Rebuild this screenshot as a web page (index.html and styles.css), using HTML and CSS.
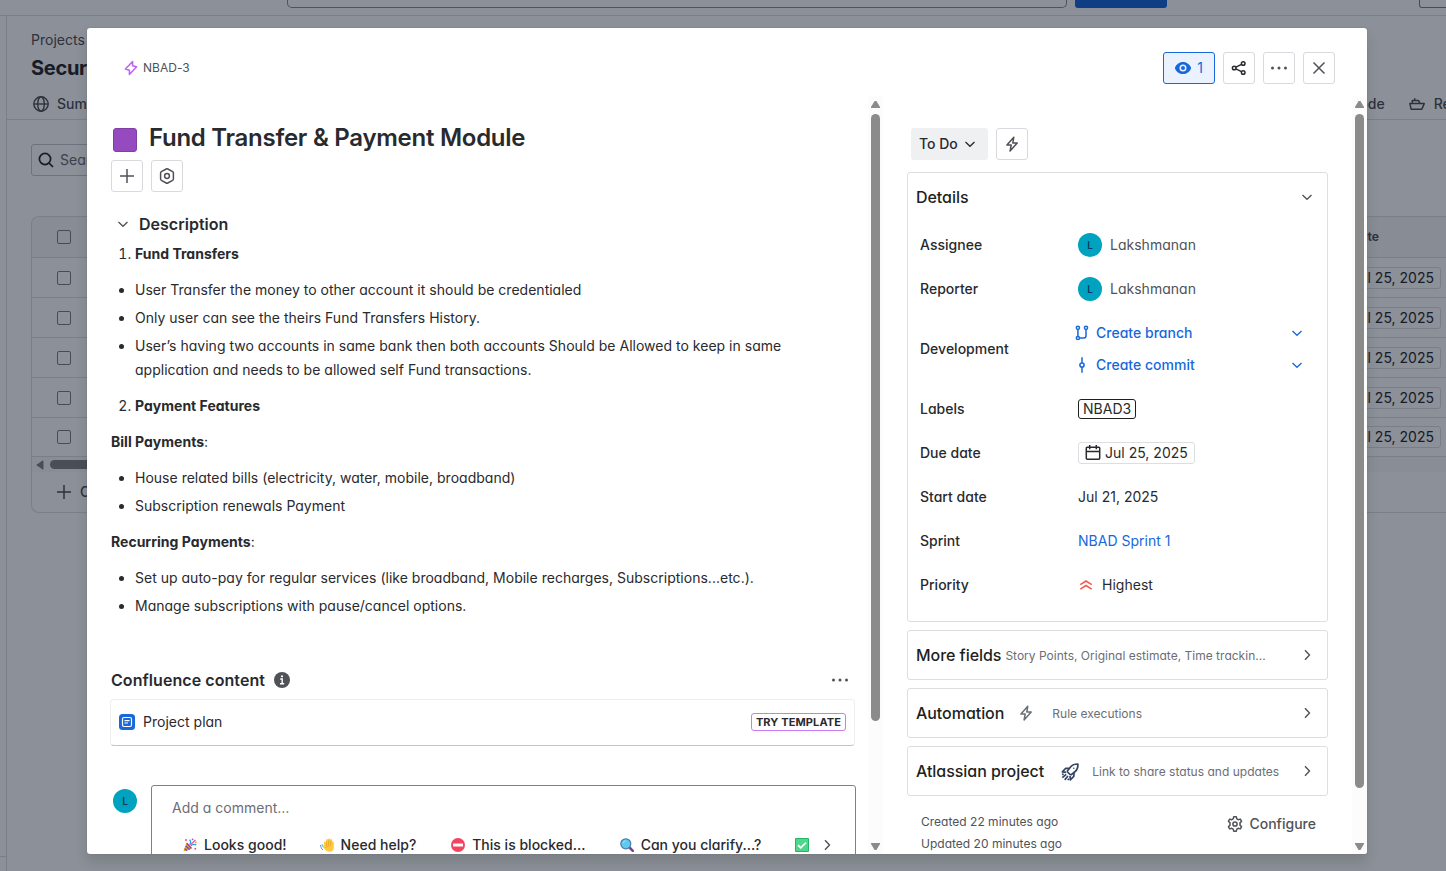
FILE: index.html
```html
<!DOCTYPE html>
<html lang="en">
<head>
<meta charset="utf-8">
<title>NBAD-3 Fund Transfer &amp; Payment Module</title>
<link rel="stylesheet" href="styles.css">
</head>
<body>
<svg class="defs" aria-hidden="true">
  <symbol id="bolt" viewBox="0 0 16 16"><path d="M9.600 1.500 2.400 9l4 1.200v4.400l7.200-7.800-4-1.100z" fill="none" stroke="currentColor" stroke-width="1.500" stroke-linejoin="round"/></symbol>
  <symbol id="flash" viewBox="0 0 16 16"><path d="M9.800 1.200 2.900 9h4.300l-1.100 5.900L13.200 7H8.800z" fill="none" stroke="currentColor" stroke-width="1.500" stroke-linejoin="round"/></symbol>
  <symbol id="down" viewBox="0 0 16 16"><path d="m3.500 6 4.500 4.300L12.500 6" fill="none" stroke="currentColor" stroke-width="1.300"/></symbol>
  <symbol id="right" viewBox="0 0 16 16"><path d="m6 3.300 4.500 4.700L6 12.700" fill="none" stroke="currentColor" stroke-width="1.400"/></symbol>
  <symbol id="dots" viewBox="0 0 16 16"><g fill="currentColor"><circle cx="1.500" cy="8" r="1.500"/><circle cx="8" cy="8" r="1.500"/><circle cx="14.500" cy="8" r="1.500"/></g></symbol>
  <symbol id="plus" viewBox="0 0 16 16"><path d="M8 1v14M1 8h14" fill="none" stroke="currentColor" stroke-width="1.500"/></symbol>
  <symbol id="cal" viewBox="0 0 16 16"><path d="M2.300 2.300h11.400a1 1 0 0 1 1 1v9.900a1 1 0 0 1-1 1H2.300a1 1 0 0 1-1-1V3.300a1 1 0 0 1 1-1zM1.300 6.500h13.400M4.700 0v4.300M11.300 0v4.300" fill="none" stroke="currentColor" stroke-width="1.500"/></symbol>
</svg>

<div class="page">
  <header class="topbar"><div class="search-field"></div><div class="create-btn"></div><div class="premium-btn"></div></header>
  <div class="workspace">
    <aside class="rail"><div class="rail-foot"></div></aside>
    <main class="board">
      <div class="crumb">Projects</div>
      <div class="project">Secure</div>
      <nav class="tabs">
        <span class="tab"><svg class="i16" viewBox="0 0 16 16" fill="none" stroke="currentColor" stroke-width="1.400"><circle cx="8" cy="8" r="7.200"/><ellipse cx="8" cy="8" rx="3.300" ry="7.200"/><path d="M.8 8h14.400"/></svg>Summary</span>
        <span class="tabs-end"><span class="tab">Code</span><span class="tab"><svg class="i16" viewBox="0 0 16 16" fill="none" stroke="currentColor" stroke-width="1.500" stroke-linejoin="round"><path d="M.9 7.600h14.300l-2.400 5.600H2.100zM3.300 7.400V4.600h6.200l1.500 2.800M5.700 4.400V2.200"/></svg>Releases</span></span>
      </nav>
      <div class="filter"><svg class="i16" viewBox="0 0 16 16" fill="none" stroke="currentColor" stroke-width="1.700"><circle cx="7" cy="7" r="5.600"/><path d="m11 11 4 4"/></svg><span>Search</span></div>
      <div class="table">
        <div class="tr th"><i class="box"></i><b>Due date</b></div>
        <div class="tr"><i class="box"></i><span class="chip">Jul 25, 2025</span></div>
        <div class="tr"><i class="box"></i><span class="chip">Jul 25, 2025</span></div>
        <div class="tr"><i class="box"></i><span class="chip">Jul 25, 2025</span></div>
        <div class="tr"><i class="box"></i><span class="chip">Jul 25, 2025</span></div>
        <div class="tr last"><i class="box"></i><span class="chip">Jul 25, 2025</span></div>
        <div class="hscroll"><svg width="8" height="10" viewBox="0 0 8 10"><path d="M7 .8v8.400L.8 5z" fill="#858585" stroke="#858585" stroke-linejoin="round"/></svg><div class="hthumb"></div></div>
        <div class="add"><svg class="i16"><use href="#plus"/></svg><span>Create</span></div>
      </div>
    </main>
  </div>
</div>

<div class="blanket"></div>
<section class="modal">
  <header class="modal-head">
    <div class="key"><svg class="i16 purple"><use href="#bolt"/></svg><span>NBAD-3</span></div>
    <div class="actions">
      <button class="btn watch"><svg class="i16" viewBox="0 0 16 16"><path fill-rule="evenodd" d="M8 2C4 2 1.300 4.800.2 7.100a2 2 0 0 0 0 1.800C1.300 11.200 4 14 8 14s6.700-2.800 7.800-5.100a2 2 0 0 0 0-1.800C14.700 4.800 12 2 8 2zm0 2.500a3.500 3.500 0 1 1 0 7 3.500 3.500 0 0 1 0-7z" fill="currentColor"/><circle cx="8" cy="8" r="2" fill="currentColor"/></svg>1</button>
      <button class="btn dark"><svg class="i16" viewBox="0 0 16 16" fill="none" stroke="currentColor" stroke-width="1.500"><circle cx="3.200" cy="8" r="1.800"/><circle cx="12.200" cy="3.500" r="1.800"/><circle cx="12.200" cy="12.500" r="1.800"/><path d="m4.900 7.200 5.600-2.800M4.900 8.800l5.600 2.800"/></svg></button>
      <button class="btn"><svg class="i16"><use href="#dots"/></svg></button>
      <button class="btn"><svg class="i16" viewBox="0 0 16 16" fill="none" stroke="currentColor" stroke-width="1.500"><path d="m2.500 2.500 11 11m0-11-11 11"/></svg></button>
    </div>
  </header>

  <div class="modal-body">
    <div class="main-pane">
      <div class="content">
        <div class="title-row"><span class="swatch"></span><h1>Fund Transfer &amp; Payment Module</h1></div>
        <div class="tools">
          <button class="btn"><svg class="i16"><use href="#plus"/></svg></button>
          <button class="btn"><svg class="i16" viewBox="0 0 16 16" fill="none" stroke="currentColor" stroke-width="1.500" stroke-linejoin="round"><path d="M7.200 1 2.400 3.700a1.500 1.500 0 0 0-.8 1.300v6c0 .5.300 1 .8 1.300L7.200 15c.5.300 1.100.3 1.600 0l4.800-2.700c.5-.3.8-.8.8-1.300V5c0-.5-.3-1-.8-1.300L8.800 1a1.600 1.600 0 0 0-1.600 0z"/><circle cx="8" cy="8" r="2.400"/></svg></button>
        </div>
        <h2 class="desc-head"><svg class="i16"><use href="#down"/></svg>Description</h2>
        <div class="prose">
          <ol><li><b>Fund Transfers</b></li></ol>
          <ul>
            <li>User Transfer the money to other account it should be credentialed</li>
            <li>Only user can see the theirs Fund Transfers History.</li>
            <li>User’s having two accounts in same bank then both accounts Should be Allowed to keep in same application and needs to be allowed self Fund transactions.</li>
          </ul>
          <ol start="2"><li><b>Payment Features</b></li></ol>
          <p><b>Bill Payments</b>:</p>
          <ul>
            <li>House related bills (electricity, water, mobile, broadband)</li>
            <li>Subscription renewals Payment</li>
          </ul>
          <p><b>Recurring Payments</b>:</p>
          <ul>
            <li>Set up auto-pay for regular services (like broadband, Mobile recharges, Subscriptions...etc.).</li>
            <li>Manage subscriptions with pause/cancel options.</li>
          </ul>
        </div>
        <div class="conf-head">
          <h2>Confluence content</h2>
          <svg class="i16" viewBox="0 0 16 16"><circle cx="8" cy="8" r="8" fill="#505258"/><path d="M6.200 7h2v4.500M6 11.700h4.200" fill="none" stroke="#fff" stroke-width="1.400"/><circle cx="8" cy="4.300" r="1.100" fill="#fff"/></svg>
          <svg class="i16 more"><use href="#dots"/></svg>
        </div>
        <div class="template">
          <svg class="i16" viewBox="0 0 16 16"><rect width="16" height="16" rx="3.500" fill="#1868db"/><rect x="3.500" y="3.500" width="9" height="9" rx="1.500" fill="none" stroke="#fff" stroke-width="1.200"/><path d="M5.500 6.700h5M5.500 9h3.500" stroke="#fff" stroke-width="1.200"/></svg>
          <span>Project plan</span><span class="lozenge">TRY TEMPLATE</span>
        </div>
        <div class="comment">
          <span class="avatar">L</span>
          <div class="editor">
            <div class="placeholder">Add a comment…</div>
            <div class="replies">
              <span class="reply r1"><svg class="i14" viewBox="0 0 14 14"><path d="M.4 13.600 3.400 4.600l6 6z" fill="#f5a623"/><path d="m1.600 10.600 2.600 2.100M2.700 8l4.100 3.600M3.800 5.300l4.600 5" stroke="#7a50b8" stroke-width="1.400"/><path d="M6.500 6.600C8 5.200 8 3.500 6.600 1.600M7.800 7.800c1.800-1.800 3.400-2 5.400-.9" fill="none" stroke="#2c9be8" stroke-width="1.200"/><path d="M7.500 6.900 12.400 2" stroke="#f04a9c" stroke-width="1.300"/><g fill="#f04a9c"><circle cx="3" cy="2" r="1"/><circle cx="12.300" cy="10.800" r="1"/></g><circle cx="9.600" cy="1.300" r=".9" fill="#8a63d2"/><circle cx="12.800" cy="4.500" r=".9" fill="#f5a623"/></svg>Looks good!</span>
              <span class="reply r2"><svg class="i14" viewBox="0 0 14 14"><path d="M4 7.300 3.900 4c.1-1 1.400-1 1.600-.1l.4 1.600.3-3.600C6.400.8 7.800.8 8 1.800l.4-.9c.5-.9 1.700-.6 1.700.4l.3.500c.6-.8 1.800-.4 1.800.6l.2 1.500c.7-.4 1.400 0 1.400.8v5c0 2.700-2 4.300-4.400 4.100-2.200-.1-3.500-1.300-6.400-4.600-.7-1 .1-2.300 1-1.900z" fill="#ffc83d"/><path d="m6.400 7.500.3-4M8.500 7l.1-4.500M10.700 7.200l-.1-4.200M5.500 10c1-1.500 2.500-2.300 4.500-2" fill="none" stroke="#e69b1f" stroke-width=".7"/><path d="M.5 7c.2 2 .9 3.700 2.400 5M2.200 6.300c-.1 1 .1 1.600.4 2.200" fill="none" stroke="#3d9ee8" stroke-width="1"/></svg>Need help?</span>
              <span class="reply r3"><svg class="i14" viewBox="0 0 14 14"><circle cx="7" cy="7" r="7" fill="#f8415f"/><rect x="2" y="5.500" width="10" height="3" rx=".5" fill="#fff"/></svg>This is blocked...</span>
              <span class="reply r4"><svg class="i14" viewBox="0 0 14 14"><path d="m9.500 9.500 3.300 3.300" stroke="#7d4389" stroke-width="2.600" stroke-linecap="round"/><circle cx="5.800" cy="5.800" r="5" fill="#5fc9ee" stroke="#4a7bb0" stroke-width="1.200"/><path d="M3 5c.4-1.200 1.200-1.900 2.400-2" fill="none" stroke="#b7edff" stroke-width=".9"/></svg>Can you clarify...?</span>
              <span class="reply r5"><svg class="i14" viewBox="0 0 14 14"><rect width="14" height="14" rx="1" fill="#24b569"/><rect x="1" y="1" width="12" height="12" rx=".5" fill="#4ed68c"/><path d="m3 7.200 2.700 2.700L11 4.600" fill="none" stroke="#fff" stroke-width="1.700"/></svg></span>
              <svg class="i16 next"><use href="#right"/></svg>
            </div>
          </div>
        </div>
      </div>
      <div class="scrollbar"><i class="up"></i><div class="thumb short"></div><i class="dn"></i></div>
    </div>

    <div class="side-pane">
      <div class="side">
        <div class="status-row">
          <button class="status">To Do<svg class="i16"><use href="#down"/></svg></button>
          <button class="btn"><svg class="i16"><use href="#flash"/></svg></button>
        </div>
        <div class="panel details">
          <div class="panel-head"><span class="panel-title">Details</span><svg class="i16"><use href="#down"/></svg></div>
          <div class="row"><span class="label">Assignee</span><span class="value grey"><span class="avatar">L</span>Lakshmanan</span></div>
          <div class="row"><span class="label">Reporter</span><span class="value grey"><span class="avatar">L</span>Lakshmanan</span></div>
          <div class="row dev"><span class="label">Development</span>
            <div class="dev-list">
              <div class="dev-item"><svg class="i16" viewBox="0 0 16 16" fill="none" stroke="currentColor" stroke-width="1.500"><circle cx="3.900" cy="2.800" r="1.600"/><circle cx="12" cy="2.800" r="1.600"/><circle cx="3.900" cy="13" r="1.600"/><path d="M3.900 4.500v7M12 4.500v6.300a2.200 2.200 0 0 1-2.200 2.200H5.400"/></svg><span>Create branch</span><svg class="i16 caret"><use href="#down"/></svg></div>
              <div class="dev-item"><svg class="i16" viewBox="0 0 16 16" fill="none" stroke="currentColor" stroke-width="1.500"><circle cx="8" cy="8" r="2.100"/><path d="M8 .2v5.700M8 10.100v5.700"/></svg><span>Create commit</span><svg class="i16 caret"><use href="#down"/></svg></div>
            </div>
          </div>
          <div class="row"><span class="label">Labels</span><span class="tag">NBAD3</span></div>
          <div class="row"><span class="label">Due date</span><span class="due"><svg class="i16"><use href="#cal"/></svg>Jul 25, 2025</span></div>
          <div class="row"><span class="label">Start date</span><span class="value">Jul 21, 2025</span></div>
          <div class="row"><span class="label">Sprint</span><span class="value link">NBAD Sprint 1</span></div>
          <div class="row"><span class="label">Priority</span><span class="value"><svg class="i16 red" viewBox="0 0 16 16" fill="none" stroke="currentColor" stroke-width="1.600"><path d="M2.300 7.600 8 4l5.700 3.600M2.300 12.100 8 8.500l5.700 3.600"/></svg>Highest</span></div>
        </div>
        <div class="panel fold"><span class="panel-title">More fields</span><span class="hint hint-fields">Story Points, Original estimate, Time trackin...</span><svg class="i16"><use href="#right"/></svg></div>
        <div class="panel fold"><span class="panel-title">Automation</span><svg class="i16 lead"><use href="#flash"/></svg><span class="hint hint-rules">Rule executions</span><svg class="i16"><use href="#right"/></svg></div>
        <div class="panel fold"><span class="panel-title">Atlassian project</span><svg class="rocket" viewBox="0 0 18 18" fill="none" stroke="currentColor" stroke-width="1.700" stroke-linejoin="round"><path d="m6 8.500 3.700-4.700C11.400 1.700 13.600 1 16.900 1c.1 3.300-.6 5.700-2.700 7.500l-4.500 3.700"/><path d="M8.300 5.300H4.700L1.400 8.900l3.800.4M13 9.700l-.2 3.700-3.500 3.400-.2-3.800"/><path d="m5.200 11.300-3.900 3.300M7 13l-3.300 3.900M2.500 10.800l-1.400.9M7.800 15.600l-.9 1.500M6 8.500l3.700 3.700"/><circle cx="12.800" cy="5.200" r=".8" fill="currentColor" stroke="none"/></svg><span class="hint hint-link">Link to share status and updates</span><svg class="i16"><use href="#right"/></svg></div>
        <div class="foot">
          <div class="stamps"><div>Created 22 minutes ago</div><div>Updated 20 minutes ago</div></div>
          <div class="configure"><svg class="i16" viewBox="0 0 16 16" fill="none" stroke="currentColor" stroke-width="1.500" stroke-linejoin="round"><path d="M6.700.8h2.600l.5 2.100 1.400.8 2.100-.6 1.300 2.200L13 6.900v2.200l1.600 1.600-1.300 2.200-2.100-.6-1.400.8-.5 2.100H6.700l-.5-2.100-1.400-.8-2.100.6-1.300-2.200L3 9.100V6.900L1.400 5.300l1.300-2.200 2.100.6 1.400-.8z"/><circle cx="8" cy="8" r="2.100"/></svg>Configure</div>
        </div>
      </div>
      <div class="scrollbar"><i class="up"></i><div class="thumb long"></div><i class="dn"></i></div>
    </div>
  </div>
</section>
</body>
</html>
```
FILE: styles.css
```css
* { box-sizing: border-box; }
body {
  margin: 0;
  height: 871px;
  overflow: hidden;
  position: relative;
  font: 14px/20px Inter, "Liberation Sans", sans-serif;
  font-feature-settings: "cv11";
  letter-spacing: .0009em;
  color: #292a2e;
  background: #fff;
}
.defs { position: absolute; width: 0; height: 0; }
svg { display: block; flex: none; }
.i16 { width: 16px; height: 16px; }
.i14 { width: 14px; height: 14px; }
h1, h2, p, ul, ol { margin: 0; }
button { font: inherit; font-feature-settings: inherit; color: inherit; padding: 0; }

/* Page behind the dialog */
.page { height: 871px; display: flex; flex-direction: column; overflow: hidden; }
.topbar { height: 16px; border-bottom: 1px solid #dddee1; display: flex; align-items: flex-start; padding-left: 287px; flex: none; }
.topbar > div { flex: none; height: 8px; }
.search-field { width: 780px; border: 1px solid #8c8f97; border-top: 0; border-radius: 0 0 5px 5px; }
.create-btn { width: 92px; margin-left: 8px; background: #1868db; border-radius: 0 0 3px 3px; }
.premium-btn { width: 60px; margin-left: 252px; border: 1px solid #af59e1; border-top: 0; border-radius: 0 0 3px 3px; }
.workspace { flex: 1; display: flex; }
.rail { width: 7px; border-right: 1px solid #dddee1; display: flex; flex-direction: column; justify-content: flex-end; }
.rail-foot { height: 15px; border-top: 1px solid #dddee1; }
.board { flex: 1; padding-top: 14px; min-width: 0; }
.crumb { padding-left: 24px; color: #505258; }
.project { padding-left: 24px; margin-top: 6px; font-size: 20px; line-height: 24px; font-weight: 700; letter-spacing: -.015em; width: 98px; overflow: hidden; }
.tabs { display: flex; justify-content: space-between; height: 40px; padding: 14px 0 0 26px; border-bottom: 1px solid #dddee1; color: #505258; font-weight: 500; }
.tab { display: flex; align-items: center; gap: 9px; height: 20px; }
.tab:first-child { gap: 8px; }
.tabs-end { display: flex; gap: 24px; width: 97px; margin-left: auto; white-space: nowrap; }
.filter { margin: 24px 0 0 24px; width: 160px; height: 32px; border: 1px solid #c7c8cd; border-radius: 3px; padding: 0 6px; display: flex; align-items: center; gap: 6px; color: #292a2e; }
.filter span { color: #6b6e76; }
.table { margin: 40px 0 0 24px; height: 297px; border: 1px solid #dddee1; border-right: 0; border-radius: 8px 0 0 8px; overflow: hidden; }
.tr { height: 40px; border-bottom: 1px solid #dddee1; display: flex; align-items: center; justify-content: space-between; padding: 0 5px 0 25px; }
.tr.th { height: 41px; background: #f8f8f8; padding-right: 67px; font-size: 12px; color: #505258; }
.tr.last { height: 39px; }
.box { width: 14px; height: 14px; border: 1px solid #7d818a; border-radius: 2px; }
.chip { height: 22px; border: 1px solid #dddee1; border-radius: 3px; line-height: 20px; padding: 0 6px; }
.hscroll { height: 15px; display: flex; align-items: center; padding-left: 4px; gap: 6px; background: #fafafa; }
.hthumb { width: 500px; height: 9px; border-radius: 5px; background: #858585; }
.add { display: flex; align-items: center; gap: 8px; padding: 10px 0 0 24px; color: #505258; font-weight: 500; }
.blanket { position: absolute; inset: 0; background: rgba(5, 12, 31, .46); }

/* Dialog */
.modal {
  position: absolute; left: 87px; top: 28px; width: 1280px; height: 826px;
  background: #fff; border-radius: 3px; overflow: hidden;
  box-shadow: 0 8px 12px rgba(30, 31, 33, .15), 0 0 1px rgba(30, 31, 33, .31);
  display: flex; flex-direction: column;
}
.modal-head { height: 68px; flex: none; padding: 24px 32px 0 36px; display: flex; justify-content: space-between; }
.key { display: flex; align-items: center; height: 32px; gap: 4px; font-size: 12px; color: #505258; }
.purple { color: #bf63f3; }
.actions, .tools { display: flex; gap: 8px; }
.btn { width: 32px; height: 32px; border: 1px solid #d9dade; border-radius: 3px; background: #fff; color: #505258; display: flex; align-items: center; justify-content: center; }
.btn.dark { color: #292a2e; }
.btn.watch { width: 52px; gap: 6px; background: #e9f2fe; border-color: #1868db; color: #1868db; }
.modal-body { flex: 1; display: flex; min-height: 0; }
.main-pane { width: 796px; display: flex; overflow: hidden; }
.content { width: 781px; padding: 28px 12px 0 24px; flex: none; }
.title-row { display: flex; align-items: flex-start; gap: 12px; height: 36px; padding-left: 2px; }
.swatch { width: 24px; height: 24px; margin-top: 4px; border-radius: 3px; background: #964ac0; border: 1px solid #803fa5; }
h1 { font-size: 24px; line-height: 28px; font-weight: 600; letter-spacing: -.0112em; font-feature-settings: normal; }
.content h2 { font-size: 16px; line-height: 20px; font-weight: 600; }
.desc-head { display: flex; align-items: center; gap: 8px; margin: 22px 0 8px; padding-left: 4px; }
.desc-head svg { color: #505258; }
.prose { line-height: 24px; padding-right: 40px; }
.prose ul, .prose ol { padding-left: 24px; }
.prose > * + * { margin-top: 12px; }
.prose li + li { margin-top: 4px; }
.prose b { font-weight: 700; }
.conf-head { display: flex; align-items: center; gap: 9px; margin-top: 52px; }
.conf-head h2 { letter-spacing: .004em; }
.more { margin-left: auto; margin-right: 8px; color: #505258; }
.template { margin: 9px 0 0 -1px; width: 745px; height: 47px; border: 1px solid #eeeef0; border-bottom-color: #c2c4c8; border-radius: 4px; padding: 0 8px 1px; display: flex; align-items: center; gap: 8px; }
.lozenge { margin-left: auto; border: 1px solid #c97cf4; border-radius: 3px; height: 18px; line-height: 16px; padding: 0 4px; font-size: 11px; font-weight: 700; letter-spacing: .01em; }
.avatar { width: 24px; height: 24px; border-radius: 50%; background: #00a3bf; color: #0b3c66; display: flex; align-items: center; justify-content: center; font-size: 10px; font-weight: 600; flex: none; }
.comment { display: flex; margin-top: 39px; padding-left: 2px; }
.comment .avatar { margin-top: 4px; }
.editor { margin-left: 14px; width: 705px; flex: none; height: 120px; border: 1px solid #7d818a; border-radius: 3px; padding: 12px 20px; }
.placeholder { color: #6b6e76; }
.replies { display: flex; align-items: center; margin: 17px 0 0 11px; font-weight: 500; white-space: nowrap; }
.reply { display: flex; align-items: center; gap: 7px; }
.r1 { width: 137px; } .r2 { width: 132px; } .r3 { width: 169px; } .r4 { width: 176px; } .r5 { width: 24px; }
.next, .fold > svg:last-child { color: #505258; }

.scrollbar { width: 15px; background: #fcfcfc; display: flex; flex-direction: column; align-items: flex-start; padding: 5px 0 4px 3px; flex: none; }
.up, .dn { width: 9px; height: 7px; background: #8b8b8b; flex: none; }
.up { clip-path: polygon(40% 0, 60% 0, 100% 85%, 100% 100%, 0 100%, 0 85%); }
.dn { clip-path: polygon(0 0, 100% 0, 100% 15%, 60% 100%, 40% 100%, 0 15%); margin-top: auto; }
.thumb { width: 9px; margin-top: 6px; border-radius: 5px; background: #8b8b8b; }
.short { height: 607px; }
.long { height: 674px; }

/* Issue sidebar */
.side-pane { width: 484px; display: flex; justify-content: space-between; overflow: hidden; }
.side { width: 421px; margin-left: 24px; padding-top: 32px; flex: none; }
.status-row { display: flex; gap: 8px; padding-left: 4px; }
.status { width: 77px; height: 32px; border: 0; border-radius: 3px; background: #eff0f1; font-weight: 500; display: flex; align-items: center; padding-left: 8px; gap: 4px; }
.panel { border: 1px solid #dddee1; border-radius: 3px; }
.details { height: 450px; margin-top: 12px; }
.panel-head { height: 50px; display: flex; align-items: center; justify-content: space-between; padding: 0 12px 2px 8px; color: #505258; }
.panel-title { font-size: 16px; font-weight: 500; color: #1e1f21; white-space: nowrap; letter-spacing: -.003em; }
.row { height: 44px; padding-left: 12px; display: flex; align-items: center; }
.row.dev { height: 76px; }
.label { width: 158px; font-weight: 500; flex: none; }
.value { display: flex; align-items: center; gap: 8px; }
.grey { color: #505258; }
.link, .dev-item { color: #1868db; }
.dev-list { margin-left: -4px; flex: 1; }
.dev-item { height: 32px; display: flex; align-items: center; gap: 6px; font-weight: 500; padding-right: 22px; }
.caret { margin-left: auto; }
.tag { height: 20px; line-height: 18px; border: 1px solid #1e1f21; border-radius: 3px; padding: 0 4px; }
.due { height: 22px; display: flex; align-items: center; gap: 4px; border: 1px solid #dddee1; border-radius: 3px; padding: 0 6px; }
.red { color: #f15b50; }
.fold { height: 50px; margin-top: 8px; padding: 0 12px 0 8px; display: flex; align-items: center; }
.fold > svg:last-child { margin-left: auto; }
.hint { font-size: 12px; color: #6b6e76; white-space: nowrap; padding-top: 2px; }
.hint-fields { margin-left: 4px; }
.lead { margin-left: 14px; color: #6b6e76; }
.hint-rules { margin-left: 18px; }
.rocket { width: 18px; height: 18px; margin: 2px 0 0 17px; color: #344563; }
.hint-link { margin-left: 13px; letter-spacing: .002em; }
.foot { display: flex; justify-content: space-between; padding: 15px 12px 0 14px; }
.stamps { font-size: 12px; line-height: 22px; color: #505258; }
.configure { display: flex; align-items: center; gap: 6px; height: 26px; font-weight: 500; color: #505258; }
```
